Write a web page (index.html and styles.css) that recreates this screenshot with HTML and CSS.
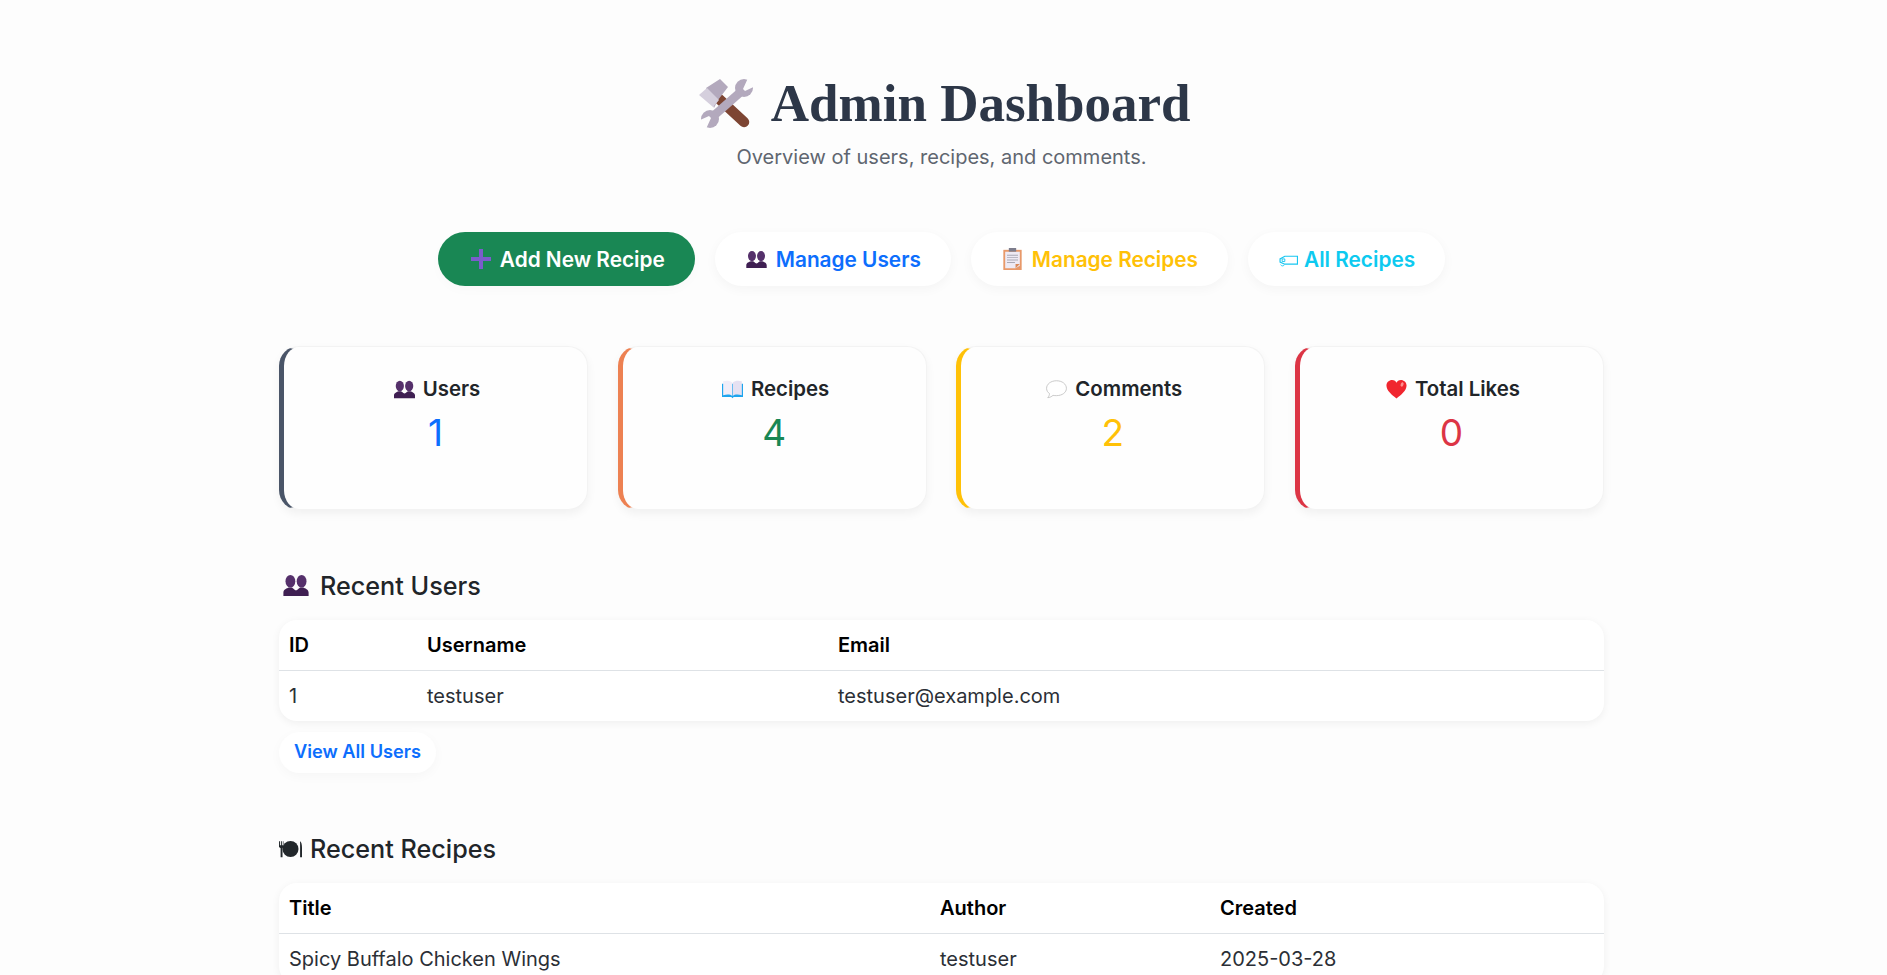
FILE: index.html
```html
<!DOCTYPE html>
<html lang="en">
  <head>
    <meta charset="UTF-8">
    <meta name="viewport" content="width=device-width, initial-scale=1.0">
    <title>Admin Dashboard</title>
    <link rel="stylesheet" href="styles.css">
  </head>
  <body>
    <svg class="icon_defs" aria-hidden="true">
      <symbol id="i_people" viewBox="0 0 36 30">
        <ellipse cx="10" cy="9" rx="7" ry="9" fill="#55306b" />
        <ellipse cx="26" cy="9" rx="7" ry="9" fill="#55306b" />
        <path fill="#3f1f52" d="M0 30v-5c0-4 5-6 8-7h4c1 1 3 2 4 3l2 1 2-1c1-1 3-2 4-3h4c3 1 8 3 8 7v5z" />
      </symbol>
      <symbol id="i_book" viewBox="0 0 36 32">
        <path fill="#1ea5ee" d="M0 6h36v23H20l-2 2-2-2H0z" />
        <path fill="#f1edf8" d="M2 2c6-2 12-1 15.500 2v23C14 24 8 24 2 26z" />
        <path fill="#e6e1f2" d="M34 2c-6-2-12-1-15.500 2v23c3.500-3 9.500-3 15.500-1z" />
      </symbol>
      <symbol id="i_bubble" viewBox="0 0 36 32">
        <path fill="#fff" stroke="#b9b9b9" stroke-width="1.300" d="M18 1C8 1 1 7 1 14c0 4 2 7 5 9 0 2-1 5-3 7 3 0 7-2 9-4 2 .5 4 .5 6 .5 10 0 17-5.500 17-12.500S28 1 18 1z" />
      </symbol>
      <symbol id="i_heart" viewBox="0 0 36 34">
        <path fill="#f0262f" d="M18 33C10 27 0 19 0 10 0 4 5 0 10 0c4 0 7 2 8 5 1-3 4-5 8-5 5 0 10 4 10 10 0 9-10 17-18 23z" />
        <ellipse cx="28" cy="8" rx="2.500" ry="4" fill="#ff8f8f" transform="rotate(20 28 8)" />
      </symbol>
      <symbol id="i_plus" viewBox="0 0 20 20">
        <path fill="#7b5ccc" d="M8 0h4v8h8v4h-8v8H8v-8H0V8h8z" />
      </symbol>
      <symbol id="i_clipboard" viewBox="0 0 30 36">
        <path fill="#e8996a" d="M0 3h30v33H0z" />
        <path fill="#eeeaf4" d="M3 6h24v23l-7 4H3z" />
        <path fill="#7d7d8c" d="M9 0h12v6H9z" />
        <path fill="#a9a9b5" d="M6 11h18v1.500H6zM6 15h18v1.500H6zM6 19h18v1.500H6zM6 23h13v1.500H6z" />
        <path fill="#d98a5a" d="M20 33v-7h7z" />
      </symbol>
      <symbol id="i_tag" viewBox="0 0 36 24">
        <path fill="none" stroke="#17c6f1" stroke-width="2.200" d="M11 4h24v15H11L2 15V9z" />
        <path fill="none" stroke="#17c6f1" stroke-width="1.800" d="M6 9h5v5H6zM3 20c2 3 6 3 7 0" />
      </symbol>
      <symbol id="i_plate" viewBox="0 0 36 26">
        <circle cx="18" cy="13" r="12.500" fill="#22272b" />
        <path fill="#22272b" d="M0 1h1.500v6H3V1h1.500v6H6V1h1v9L5.500 12v14h-3V12L0 10zM33 1c2 1 3 5 3 10v15h-3z" />
      </symbol>
      <symbol id="i_tools" viewBox="4 3 54 51">
        <line x1="22" y1="22" x2="49" y2="47" stroke="#7d4533" stroke-width="10.500" stroke-linecap="round" />
        <path fill="#b3a9bd" d="M11 13L25 4l8 8-10 13-4 8z" />
        <path fill="#d5cfdd" d="M4 20l8-7 12 12-6 7z" />
        <line x1="15" y1="44" x2="49" y2="14" stroke="#b3a9bd" stroke-width="8.500" />
        <circle cx="49" cy="13" r="9" fill="#b3a9bd" />
        <circle cx="15" cy="44" r="9" fill="#b3a9bd" />
        <path fill="#fdfdfd" d="M48 14l5-11 8 8-11 5zM16 43L11 54 3 46l11-5z" />
      </symbol>
    </svg>

    <div class="page">
      <header class="page_head">
        <h1 class="page_title"><svg class="title_icon"><use href="#i_tools" /></svg> Admin Dashboard</h1>
        <p class="page_sub">Overview of users, recipes, and comments.</p>
      </header>

      <nav class="btn_row">
        <a class="btn btn_green" href="#"><svg class="btn_icon plus"><use href="#i_plus" /></svg>Add New Recipe</a>
        <a class="btn btn_white blue" href="#"><svg class="btn_icon people"><use href="#i_people" /></svg>Manage Users</a>
        <a class="btn btn_white yellow clip_btn" href="#"><svg class="btn_icon clip"><use href="#i_clipboard" /></svg>Manage Recipes</a>
        <a class="btn btn_white cyan" href="#"><svg class="btn_icon tag"><use href="#i_tag" /></svg>All Recipes</a>
      </nav>

      <section class="stat_row">
        <div class="stat_card edge_slate">
          <div class="stat_label"><svg class="stat_icon"><use href="#i_people" /></svg>Users</div>
          <div class="stat_num blue">1</div>
        </div>
        <div class="stat_card edge_orange">
          <div class="stat_label"><svg class="stat_icon"><use href="#i_book" /></svg>Recipes</div>
          <div class="stat_num green">4</div>
        </div>
        <div class="stat_card edge_yellow">
          <div class="stat_label"><svg class="stat_icon"><use href="#i_bubble" /></svg>Comments</div>
          <div class="stat_num yellow">2</div>
        </div>
        <div class="stat_card edge_red">
          <div class="stat_label"><svg class="stat_icon"><use href="#i_heart" /></svg>Total Likes</div>
          <div class="stat_num red">0</div>
        </div>
      </section>

      <section class="block">
        <h2 class="block_title"><svg class="head_icon people_head"><use href="#i_people" /></svg>Recent Users</h2>
        <div class="table_wrap">
          <table class="data_table">
            <colgroup><col class="col_id"><col class="col_user"><col></colgroup>
            <thead><tr><th>ID</th><th>Username</th><th>Email</th></tr></thead>
            <tbody><tr><td>1</td><td>testuser</td><td>testuser@example.com</td></tr></tbody>
          </table>
        </div>
        <a class="view_all" href="#">View All Users</a>
      </section>

      <section class="block">
        <h2 class="block_title"><svg class="head_icon plate_head"><use href="#i_plate" /></svg>Recent Recipes</h2>
        <div class="table_wrap">
          <table class="data_table">
            <colgroup><col class="col_title"><col class="col_author"><col></colgroup>
            <thead><tr><th>Title</th><th>Author</th><th>Created</th></tr></thead>
            <tbody><tr><td>Spicy Buffalo Chicken Wings</td><td>testuser</td><td>2025-03-28</td></tr></tbody>
          </table>
        </div>
      </section>
    </div>
  </body>
</html>
```

FILE: styles.css
```css
html, body {
    margin: 0;
    padding: 0;
    height: 100vh;
    overflow: hidden;
    background: #fdfdfd;
}
body {
    font-family: Inter, "Liberation Sans", sans-serif;
    color: #212529;
}
.icon_defs {
    display: none;
}
.page {
    width: 1325px;
    margin-left: 279px;
    padding-top: 68px;
}

/* heading */
.page_head {
    text-align: center;
}
.page_title {
    margin: 0;
    padding-left: 7px;
    height: 70px;
    line-height: 70px;
    font-family: "Liberation Serif", serif;
    font-size: 53px;
    font-weight: 700;
    color: #2d3748;
}
.title_icon {
    width: 54px;
    height: 51px;
    margin-right: 7px;
    vertical-align: -8px;
}
.page_sub {
    margin: 5px 0 0;
    font-size: 20px;
    line-height: 28px;
    color: #5f6670;
}

/* buttons */
.btn_row {
    display: flex;
    justify-content: center;
    gap: 20px;
    margin-top: 61px;
}
.btn {
    display: flex;
    align-items: center;
    justify-content: center;
    height: 54px;
    padding: 0 30px 0 33px;
    border-radius: 27px;
    font-size: 20.800px;
    font-weight: 600;
    text-decoration: none;
}
.btn_green {
    background: #198754;
    color: #fff;
    box-shadow: 0 4px 12px rgba(0,0,0,.02);
}
.btn_white {
    padding-left: 31px;
    background: #fff;
    box-shadow: 0 3px 12px rgba(0,0,0,.04);
}
.clip_btn {
    padding-left: 32px;
}
.btn_icon {
    flex: none;
}
.plus { width: 20px; height: 20px; margin-right: 9px; }
.people { width: 21px; height: 17px; margin-right: 9px; }
.clip { width: 19px; height: 22px; margin-right: 10px; }
.tag { width: 19px; height: 13px; margin-right: 6px; margin-top: 3px; }

.blue { color: #0d6efd; }
.green { color: #198754; }
.yellow { color: #ffc107; }
.cyan { color: #0dcaf0; }
.red { color: #dc3545; }

/* stat cards */
.stat_row {
    display: flex;
    justify-content: space-between;
    margin-top: 60px;
}
.stat_card {
    box-sizing: border-box;
    width: 309px;
    height: 164px;
    padding-top: 28px;
    background: #fefefe;
    border: 1px solid #f3f3f3;
    border-left-width: 5px;
    border-radius: 20px;
    box-shadow: 0 4px 10px rgba(0,0,0,.05);
    text-align: center;
}
.edge_slate { border-left-color: #4a5568; }
.edge_orange { border-left-color: #ed8152; }
.edge_yellow { border-left-color: #ffc107; }
.edge_red { border-left-color: #dc3545; }
.stat_label {
    display: flex;
    align-items: center;
    justify-content: center;
    padding-left: 3px;
    font-size: 20.400px;
    font-weight: 600;
    line-height: 28px;
}
.stat_icon {
    width: 21px;
    height: 19px;
    margin-right: 8px;
}
.stat_num {
    margin-top: 6px;
    font-size: 37px;
    line-height: 48px;
}

/* tables */
.block {
    margin-top: 57px;
}
.block_title {
    display: flex;
    align-items: center;
    margin: 0;
    height: 35px;
    padding-top: 1px;
    font-size: 25.200px;
    font-weight: 500;
    color: #212529;
}
.head_icon {
    flex: none;
}
.people_head {
    width: 26px;
    height: 21px;
    margin: 0 11px 0 4px;
}
.plate_head {
    width: 23px;
    height: 18px;
    margin-right: 8px;
}
.table_wrap {
    margin-top: 17px;
    background: #fff;
    border-radius: 18px;
    box-shadow: 0 2px 8px rgba(0,0,0,.06);
    overflow: hidden;
}
.data_table {
    width: 100%;
    table-layout: fixed;
    border-collapse: collapse;
    font-size: 20px;
}
.data_table th, .data_table td {
    height: 50px;
    padding: 0 10px;
    text-align: left;
}
.data_table td {
    color: #2b2f36;
}
.data_table th {
    font-weight: 600;
    color: #000;
    border-bottom: 1px solid #dee2e6;
}
.col_id { width: 138px; }
.col_user { width: 411px; }
.col_title { width: 651px; }
.col_author { width: 280px; }

.view_all {
    display: inline-block;
    margin-top: 11px;
    padding: 0 15px;
    height: 41px;
    line-height: 39px;
    background: #fff;
    border-radius: 21px;
    box-shadow: 0 3px 12px rgba(0,0,0,.03);
    font-size: 18.200px;
    font-weight: 600;
    color: #0d6efd;
    text-decoration: none;
}
```
